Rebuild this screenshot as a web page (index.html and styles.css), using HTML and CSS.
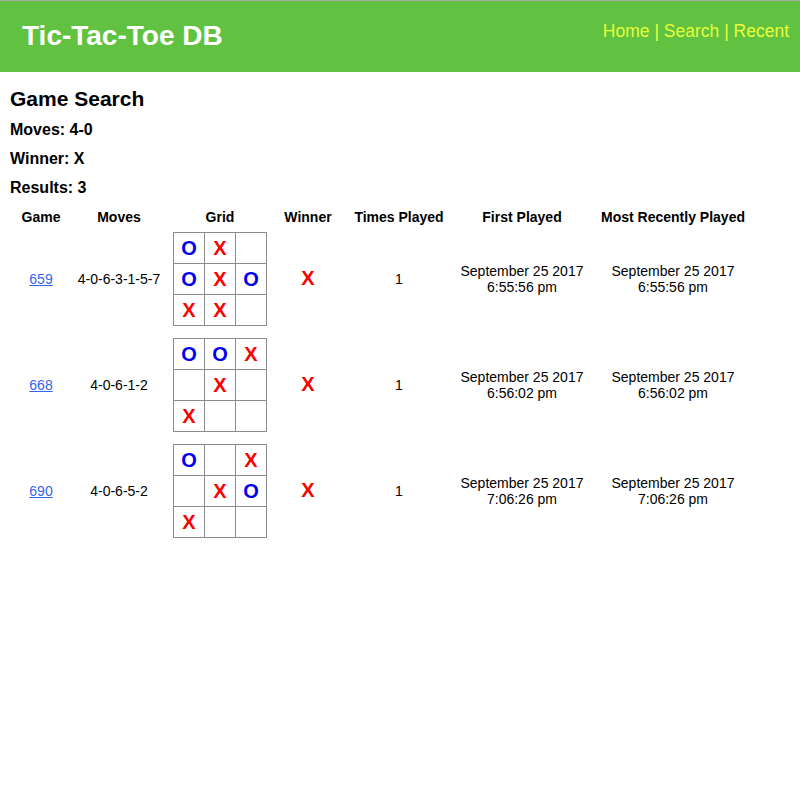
FILE: index.html
```html
<!DOCTYPE html>
<html>
<head>
<meta charset="utf-8">
<title>Tic-Tac-Toe DB</title>
<link rel="stylesheet" href="styles.css">
</head>
<body>
<header class="topbar">
  <div class="brand">Tic-Tac-Toe DB</div>
  <nav class="nav"><a href="#">Home</a> | <a href="#">Search</a> | <a href="#">Recent</a></nav>
</header>
<main class="content">
  <h2 class="title">Game Search</h2>
  <div class="meta">Moves: 4-0</div>
  <div class="meta">Winner: X</div>
  <div class="meta">Results: 3</div>
  <table class="games">
    <colgroup>
      <col class="c-game"><col class="c-moves"><col class="c-grid"><col class="c-winner"><col class="c-times"><col class="c-first"><col class="c-recent">
    </colgroup>
    <thead>
      <tr><th>Game</th><th>Moves</th><th>Grid</th><th>Winner</th><th>Times Played</th><th>First Played</th><th>Most Recently Played</th></tr>
    </thead>
    <tbody>
      <tr>
        <td><a href="#">659</a></td>
        <td>4-0-6-3-1-5-7</td>
        <td><div class="board">
          <span class="o">O</span><span class="x">X</span><span></span>
          <span class="o">O</span><span class="x">X</span><span class="o">O</span>
          <span class="x">X</span><span class="x">X</span><span></span>
        </div></td>
        <td><span class="win">X</span></td>
        <td>1</td>
        <td>September 25 2017<br>6:55:56 pm</td>
        <td>September 25 2017<br>6:55:56 pm</td>
      </tr>
      <tr>
        <td><a href="#">668</a></td>
        <td>4-0-6-1-2</td>
        <td><div class="board">
          <span class="o">O</span><span class="o">O</span><span class="x">X</span>
          <span></span><span class="x">X</span><span></span>
          <span class="x">X</span><span></span><span></span>
        </div></td>
        <td><span class="win">X</span></td>
        <td>1</td>
        <td>September 25 2017<br>6:56:02 pm</td>
        <td>September 25 2017<br>6:56:02 pm</td>
      </tr>
      <tr>
        <td><a href="#">690</a></td>
        <td>4-0-6-5-2</td>
        <td><div class="board">
          <span class="o">O</span><span></span><span class="x">X</span>
          <span></span><span class="x">X</span><span class="o">O</span>
          <span class="x">X</span><span></span><span></span>
        </div></td>
        <td><span class="win">X</span></td>
        <td>1</td>
        <td>September 25 2017<br>7:06:26 pm</td>
        <td>September 25 2017<br>7:06:26 pm</td>
      </tr>
    </tbody>
  </table>
</main>
</body>
</html>
```
FILE: styles.css
```css
html, body {
  margin: 0;
  padding: 0;
  background: #fff;
  font-family: "Liberation Sans", Arial, sans-serif;
  color: #000;
}

.topbar {
  height: 71px;
  border-top: 1px solid #a8a8a8;
  background: #60c240;
  display: flex;
  justify-content: space-between;
  align-items: flex-start;
  padding: 0 11px 0 22px;
}

.brand {
  color: #fff;
  font-weight: bold;
  font-size: 28px;
  line-height: 30px;
  margin-top: 20px;
}

.nav {
  color: #eaff3c;
  font-size: 17.5px;
  line-height: 20px;
  margin-top: 20px;
}

.nav a {
  color: #eaff3c;
  text-decoration: none;
}

.content {
  padding: 0 10px;
}

.title {
  font-size: 21px;
  line-height: 24px;
  font-weight: bold;
  margin: 15px 0 10px;
}

.meta {
  font-size: 16px;
  line-height: 18px;
  font-weight: bold;
  margin-bottom: 11px;
}

.games {
  table-layout: fixed;
  border-collapse: collapse;
  margin-top: 11px;
  font-size: 14px;
}

.c-game { width: 62px; }
.c-moves { width: 94px; }
.c-grid { width: 108px; }
.c-winner { width: 68px; }
.c-times { width: 114px; }
.c-first { width: 132px; }
.c-recent { width: 170px; }

.games th {
  font-weight: bold;
  line-height: 18px;
  padding: 0;
  text-align: center;
}

.games td {
  padding: 6px 0;
  text-align: center;
  vertical-align: middle;
  line-height: 16px;
}

.games a {
  color: #3366ee;
}

.board {
  display: inline-grid;
  grid-template-columns: repeat(3, 30px);
  grid-template-rows: repeat(3, 30px);
  gap: 1px;
  background: #8c8c8c;
  border: 1px solid #8c8c8c;
  vertical-align: middle;
}

.board span {
  background: #fff;
  display: flex;
  align-items: center;
  justify-content: center;
  font-size: 20px;
  font-weight: bold;
}

.board .x { color: #ff0000; }
.board .o { color: #0000ee; }

.win {
  color: #ff0000;
  font-size: 20px;
  font-weight: bold;
}
```
